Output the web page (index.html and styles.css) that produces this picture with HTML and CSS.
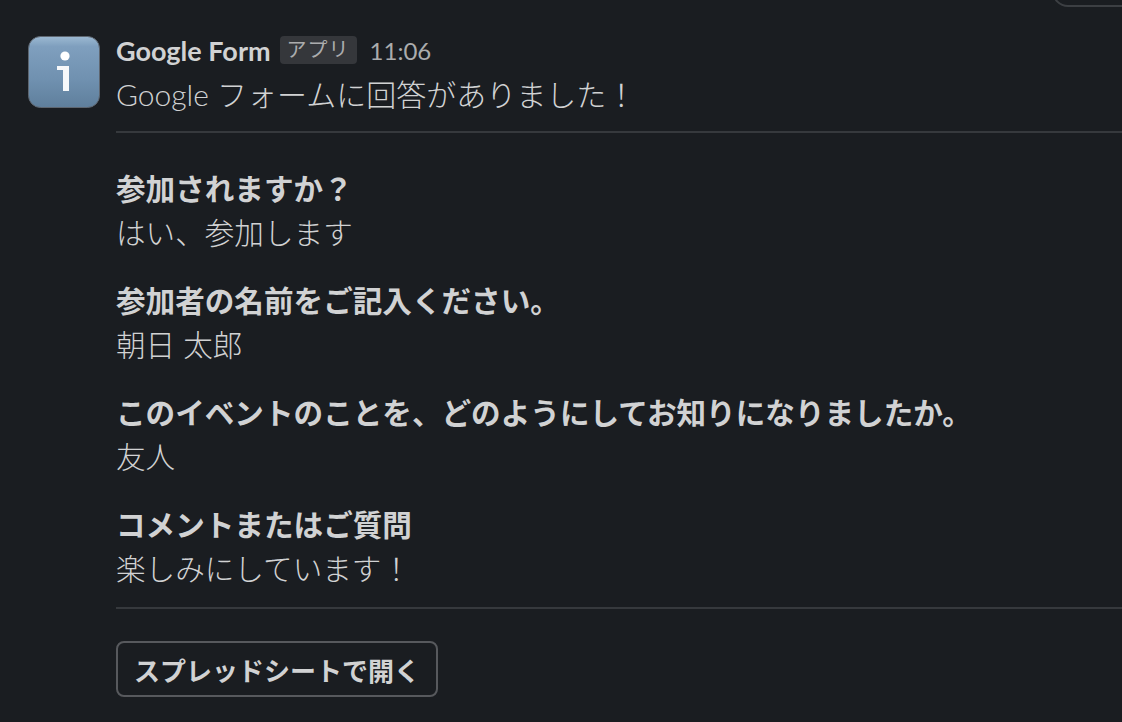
FILE: index.html
```html
<!DOCTYPE html>
<html lang="ja">
<head>
<meta charset="utf-8">
<title>Google Form</title>
<link rel="stylesheet" href="styles.css">
</head>
<body>
<div class="corner"></div>
<div class="message">
  <svg class="avatar" viewBox="0 0 72 72" aria-hidden="true">
    <defs>
      <linearGradient id="bg" x1="0" y1="0" x2="0" y2="1">
        <stop offset="0" stop-color="#9cb9d2"/>
        <stop offset="0.14" stop-color="#7f9fbe"/>
        <stop offset="0.6" stop-color="#7091b0"/>
        <stop offset="1" stop-color="#5f7f9c"/>
      </linearGradient>
    </defs>
    <rect x="0.5" y="0.5" width="71" height="71" rx="12" fill="url(#bg)" stroke="#5e6670"/>
    <circle cx="37" cy="20" r="4.6" fill="#fff"/>
    <path d="M29 30h12v25h-6V34h-6z" fill="#f6f8fa"/>
  </svg>
  <div class="content">
    <div class="header">
      <span class="sender">Google Form</span>
      <span class="badge">アプリ</span>
      <span class="time">11:06</span>
    </div>
    <p class="intro">Google フォームに回答がありました！</p>
    <div class="fields">
      <div class="field">
        <div class="label">参加されますか？</div>
        <div class="value">はい、参加します</div>
      </div>
      <div class="field">
        <div class="label">参加者の名前をご記入ください。</div>
        <div class="value">朝日 太郎</div>
      </div>
      <div class="field">
        <div class="label">このイベントのことを、どのようにしてお知りになりましたか。</div>
        <div class="value">友人</div>
      </div>
      <div class="field">
        <div class="label">コメントまたはご質問</div>
        <div class="value">楽しみにしています！</div>
      </div>
    </div>
    <button class="action" type="button">スプレッドシートで開く</button>
  </div>
</div>
</body>
</html>
```
FILE: styles.css
```css
* { box-sizing: border-box; }
html, body { margin: 0; height: 100%; }
body {
  background: #1a1d21;
  color: #d1d2d3;
  font-family: Lato, "Noto Sans CJK JP", sans-serif;
  overflow: hidden;
  position: relative;
  padding: 36px 0 0 28px;
}
.corner {
  position: absolute;
  top: -40px;
  right: -30px;
  width: 100px;
  height: 47px;
  border: 2px solid #3c3f43;
  border-radius: 16px;
}
.message { display: flex; gap: 16px; align-items: flex-start; }
.avatar { width: 72px; height: 72px; flex: none; }
.content { flex: 1; min-width: 0; }
.header { display: flex; align-items: center; height: 28px; }
.sender { font-size: 27px; font-weight: 700; color: #d1d2d3; }
.badge {
  margin-left: 9px;
  height: 28px;
  padding: 0 7px;
  background: #35373b;
  border-radius: 4px;
  font-size: 20px;
  line-height: 26px;
  color: #abacad;
  letter-spacing: 1px;
}
.time { margin-left: 13px; font-size: 24px; color: #abacad; }
.intro {
  margin: 8px 0 0;
  font-size: 30px;
  line-height: 44px;
  padding-bottom: 15px;
  border-bottom: 2px solid #36393d;
  font-weight: 300;
}
.fields {
  padding: 34px 0 16px;
  border-bottom: 2px solid #36393d;
  display: flex;
  flex-direction: column;
  gap: 24px;
}
.label { font-size: 29.6px; line-height: 44px; font-weight: 700; }
.value { font-size: 29.6px; line-height: 44px; font-weight: 300; }
.action {
  display: block;
  margin-top: 32px;
  width: 322px;
  height: 56px;
  background: transparent;
  border: 2px solid #57595d;
  border-radius: 8px;
  color: #d1d2d3;
  font-family: inherit;
  font-size: 26px;
  font-weight: 700;
  padding: 0;
}
```
